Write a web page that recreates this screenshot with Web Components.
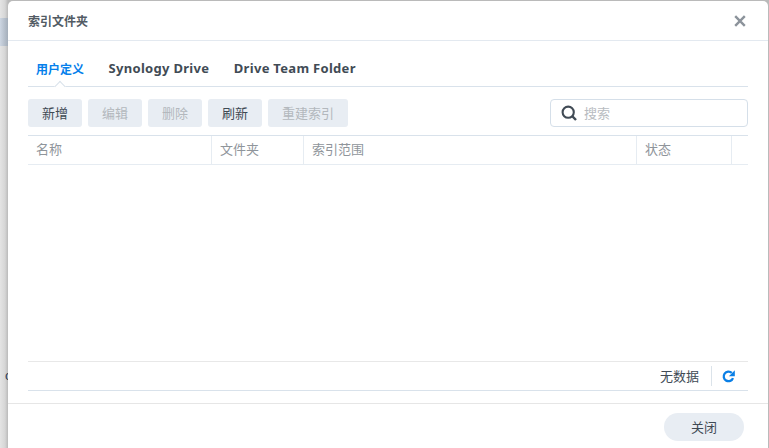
<!DOCTYPE html>
<html>
<head>
<meta charset="utf-8">
<style>
html,body{margin:0;height:448px;overflow:hidden}
body{font-family:"Noto Sans","Noto Sans CJK SC",sans-serif;font-size:13px;color:#414b55;
  background:linear-gradient(90deg,#e4e4e4 0,#d6d6d6 5px,#bababa 8px);display:flex;position:relative}
.desk{position:absolute;left:0;top:18px;width:8px;height:28px;background:linear-gradient(90deg,#cdd6e2,#a4aeba)}
.clip{position:absolute;left:5px;top:367px;font:13px/18px "Liberation Sans",sans-serif;color:#2c3a55}
</style>
</head>
<body>
<div class="desk"></div>
<span class="clip">c</span>
<index-dialog title-text="索引文件夹">
  <dlg-tabs slot="tabs" items="用户定义|Synology Drive|Drive Team Folder"></dlg-tabs>
  <dlg-toolbar slot="toolbar">
    <dlg-button>新增</dlg-button>
    <dlg-button disabled>编辑</dlg-button>
    <dlg-button disabled>删除</dlg-button>
    <dlg-button>刷新</dlg-button>
    <dlg-button disabled wide>重建索引</dlg-button>
    <dlg-search slot="end" placeholder="搜索"></dlg-search>
  </dlg-toolbar>
  <dlg-grid slot="grid"></dlg-grid>
  <dlg-button slot="foot" pill>关闭</dlg-button>
</index-dialog>
<script>
class IndexDialog extends HTMLElement{
  constructor(){
    super()
    this.attachShadow({mode:'open'})
  }
  connectedCallback(){
    this.shadowRoot.innerHTML=`
    <style>
      :host{display:flex;flex-direction:column;box-sizing:border-box;width:760px;height:447px;margin:1px 0 0 8px;
        background:#fff;border-radius:5px 5px 0 0;position:relative;z-index:1}
      .head{height:39px;flex:none;display:flex;align-items:center;justify-content:space-between;
        padding:0 22px 0 20px;border-bottom:1px solid #e3e9f0}
      .title{font-size:12px;font-weight:700;color:#525b64;font-family:"Noto Sans CJK SC",sans-serif}
      svg{display:block}
      .body{flex:none;height:350px;padding:0 20px 12px 20px;display:flex;flex-direction:column;border-bottom:1px solid #e6e6e6}
      ::slotted(dlg-grid){flex:1}
      .foot{flex:1;display:flex;justify-content:flex-end;align-items:flex-start;padding:9px 24px 0 0}
    </style>
    <div class="head">
      <span class="title">${this.getAttribute('title-text')}</span>
      <svg width="12" height="12" viewBox="0 0 12 12"><path d="M1.2 1.2 10.8 10.8M10.8 1.2 1.2 10.8" stroke="#8c939b" stroke-width="2.4" fill="none"/></svg>
    </div>
    <div class="body">
      <slot name="tabs"></slot>
      <slot name="toolbar"></slot>
      <slot name="grid"></slot>
    </div>
    <div class="foot"><slot name="foot"></slot></div>`
  }
}
class DlgTabs extends HTMLElement{
  constructor(){
    super()
    this.attachShadow({mode:'open'})
  }
  connectedCallback(){
    const items=this.getAttribute('items').split('|')
    this.shadowRoot.innerHTML=`
    <style>
      :host{display:flex;height:46px;box-sizing:border-box;border-bottom:1px solid #d9e2eb;padding-left:8px;gap:24.5px;position:relative}
      span{font-weight:700;font-size:13px;letter-spacing:.3px;line-height:18px;margin-top:18px;color:#414b55}
      span.on{color:#057feb;font-size:12px;letter-spacing:0;margin-top:19px;font-family:"Noto Sans CJK SC",sans-serif}
      .caret{position:absolute;left:28px;bottom:-1px;width:8px;height:8px;background:#fff;border:1px solid #d9e2eb;border-width:1px 0 0 1px;
        transform:translateY(3.5px) rotate(45deg);box-sizing:border-box;transform-origin:center}
    </style>
    ${items.map((t,i)=>`<span class="${i==0?'on':''}">${t}</span>`).join('')}
    <i class="caret"></i>`
  }
}
class DlgToolbar extends HTMLElement{
  constructor(){
    super()
    this.attachShadow({mode:'open'})
  }
  connectedCallback(){
    this.shadowRoot.innerHTML=`
    <style>
      :host{display:flex;align-items:flex-start;gap:6px;height:48px;padding-top:12px;box-sizing:border-box}
      .end{margin-left:auto;display:block}
    </style>
    <slot></slot><slot name="end" class="end"></slot>`
  }
}
class DlgButton extends HTMLElement{
  constructor(){
    super()
    this.attachShadow({mode:'open'})
  }
  connectedCallback(){
    this.shadowRoot.innerHTML=`
    <style>
      :host{display:flex;align-items:center;justify-content:center;box-sizing:border-box;width:54px;height:28px;padding-bottom:2px;
        background:#e8edf3;border-radius:3px;font-size:13px;color:#3f4a54;font-family:"Noto Sans CJK SC",sans-serif}
      :host([disabled]){color:#b3b8bd}
      :host([wide]){width:80px}
      :host([pill]){width:80px;border-radius:14px}
    </style>
    <slot></slot>`
  }
}
class DlgSearch extends HTMLElement{
  constructor(){
    super()
    this.attachShadow({mode:'open'})
  }
  connectedCallback(){
    this.shadowRoot.innerHTML=`
    <style>
      :host{display:flex;align-items:center;box-sizing:border-box;width:198px;height:28px;border:1px solid #d5dfe9;border-radius:4px;
        padding-left:10px;gap:7px;background:#fff;color:#b8bcc1;font-size:13px;font-family:"Noto Sans CJK SC",sans-serif}
      span{margin-top:-2px}
    </style>
    <svg width="16" height="16" viewBox="0 0 16 16"><circle cx="7.2" cy="7.2" r="5.6" stroke="#414b55" stroke-width="2.1" fill="none"/><path d="M11.2 11.2 15 15" stroke="#414b55" stroke-width="2.4" fill="none"/></svg>
    <span>${this.getAttribute('placeholder')}</span>`
  }
}
class DlgGrid extends HTMLElement{
  constructor(){
    super()
    this.attachShadow({mode:'open'})
  }
  connectedCallback(){
    const cols=[['名称',184],['文件夹',92],['索引范围',333],['状态',95],['',16]]
    this.shadowRoot.innerHTML=`
    <style>
      :host{display:flex;flex-direction:column;font-family:"Noto Sans CJK SC",sans-serif;font-size:13px}
      .hd{display:flex;height:30px;box-sizing:border-box;border-top:1px solid #d9e2eb;border-bottom:1px solid #e6ecf2;flex:none}
      .hd div{box-sizing:border-box;padding-left:8px;line-height:26px;color:#8f959b;border-right:1px solid #e6ecf2}
      .hd div:last-child{border-right:0}
      .rows{flex:1}
      .pager{height:30px;flex:none;box-sizing:border-box;border-top:1px solid #e8e8e8;border-bottom:1px solid #d9e2eb;
        display:flex;align-items:center;justify-content:flex-end;color:#414b55;padding-right:13px}
      .pager span{margin-top:-2px}
      .sep{width:1px;height:20px;background:#dbe3ea;margin:0 10px 0 12px}
    </style>
    <div class="hd">${cols.map(c=>`<div style="width:${c[1]}px">${c[0]}</div>`).join('')}</div>
    <div class="rows"></div>
    <div class="pager">
      <span>无数据</span><i class="sep"></i>
      <svg width="13" height="13" viewBox="0 0 13 13"><path d="M11 8.1A4.8 4.8 0 1 1 9.8 2.9" stroke="#0a7fe6" stroke-width="2.3" fill="none"/><path d="M12.8.3V6.2H6.9Z" fill="#0a7fe6"/></svg>
    </div>`
  }
}
customElements.define('index-dialog',IndexDialog)
customElements.define('dlg-tabs',DlgTabs)
customElements.define('dlg-toolbar',DlgToolbar)
customElements.define('dlg-button',DlgButton)
customElements.define('dlg-search',DlgSearch)
customElements.define('dlg-grid',DlgGrid)
</script>
</body>
</html>
